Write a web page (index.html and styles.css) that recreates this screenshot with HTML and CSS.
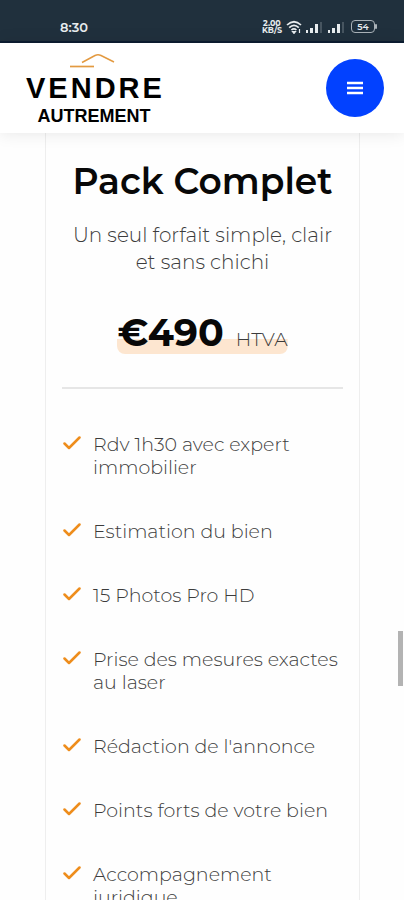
FILE: index.html
```
<!DOCTYPE html>
<html lang="fr">
<head>
<meta charset="utf-8">
<meta name="viewport" content="width=device-width, initial-scale=1">
<title>Vendre Autrement</title>
<link rel="stylesheet" href="styles.css">
</head>
<body>
<div class="screen">
  <div class="status">
    <span class="clock">8:30</span>
    <div class="indicators">
      <span class="speed"><b>2.00</b><b>KB/S</b></span>
      <svg class="wifi" viewBox="0 0 16 14" width="16" height="14" fill="none" stroke="currentColor" stroke-width="1.7"><path d="M1 5Q8-1.5 15 5M3.2 7.6Q8 3 12.8 7.6M5.4 10Q8 7.6 10.4 10"/><path d="M6.5 11.5h3L8 13.4zM13.500 9v4" stroke-width="1.200" fill="currentColor"/></svg>
      <svg viewBox="0 0 17 12" width="17" height="12" fill="currentColor"><path d="M0 9h2v3H0zM4 7h3v5H4zM9 3h3v9H9z"/><path d="M14 1h2v11h-2z" opacity=".2"/></svg>
      <svg class="second" viewBox="0 0 17 12" width="17" height="12" fill="currentColor"><path d="M0 9h2v3H0zM4 7h3v5H4zM9 3h3v9H9z"/><path d="M14 1h2v11h-2z" opacity=".2"/></svg>
      <span class="battery">54</span>
    </div>
  </div>
  <header class="header">
    <a class="logo" href="#">
      <svg viewBox="0 0 48 16" width="48" height="16" fill="none" stroke="#e39a41"><path d="M0 13.500h24" stroke-width="1.700"/><path d="M12 9.500L25 2.500Q28 1 31 2.500L44 9" stroke-width="1.500"/></svg>
      <span class="logo-top">VENDRE</span>
      <span class="logo-bottom">AUTREMENT</span>
    </a>
    <button class="menu" type="button" aria-label="Menu"><svg viewBox="0 0 16 14" width="16" height="14" stroke="#fff" stroke-width="2.500"><path d="M0 2h16M0 7h16M0 12h16"/></svg></button>
  </header>
  <main class="card">
    <h1>Pack Complet</h1>
    <p class="intro">Un seul forfait simple, clair et sans chichi</p>
    <p class="price"><span class="mark"><strong>€490</strong><span class="tax">HTVA</span></span></p>
    <hr>
    <ul class="features">
      <li><svg viewBox="0 0 18 14" width="18" height="14"><path d="M1.500 7.500L6 12L16.500 1.500"/></svg><span>Rdv 1h30 avec expert immobilier</span></li>
      <li><svg viewBox="0 0 18 14" width="18" height="14"><path d="M1.500 7.500L6 12L16.500 1.500"/></svg><span>Estimation du bien</span></li>
      <li><svg viewBox="0 0 18 14" width="18" height="14"><path d="M1.500 7.500L6 12L16.500 1.500"/></svg><span>15 Photos Pro HD</span></li>
      <li><svg viewBox="0 0 18 14" width="18" height="14"><path d="M1.500 7.500L6 12L16.500 1.500"/></svg><span>Prise des mesures exactes au laser</span></li>
      <li><svg viewBox="0 0 18 14" width="18" height="14"><path d="M1.500 7.500L6 12L16.500 1.500"/></svg><span>Rédaction de l'annonce</span></li>
      <li><svg viewBox="0 0 18 14" width="18" height="14"><path d="M1.500 7.500L6 12L16.500 1.500"/></svg><span>Points forts de votre bien</span></li>
      <li><svg viewBox="0 0 18 14" width="18" height="14"><path d="M1.500 7.500L6 12L16.500 1.500"/></svg><span>Accompagnement juridique</span></li>
    </ul>
  </main>
  <div class="scroll-thumb"></div>
</div>
</body>
</html>
```
FILE: styles.css
```
* { box-sizing: border-box; }
body {
  margin: 0;
  background: #fefefe;
  color: #3c3c3c;
  font-family: Montserrat, Inter, "Open Sans", sans-serif;
}
.screen {
  position: relative;
  height: 100vh;
  overflow: hidden;
}
.status {
  display: flex;
  align-items: center;
  justify-content: space-between;
  height: 43px;
  padding: 12px 29px 0 60px;
  background: #20303d;
  border-bottom: 2px solid #0c1d32;
  color: #e8ecee;
}
.clock {
  font-size: 13px;
  font-weight: 600;
}
.indicators {
  display: flex;
  align-items: center;
  gap: 4px;
}
.second { margin-left: 1px; }
.speed {
  display: grid;
  justify-items: center;
  font-size: 8px;
  line-height: 7px;
}
.battery {
  position: relative;
  width: 24px;
  height: 13px;
  margin-left: 2px;
  border: 1px solid #aab2b8;
  border-radius: 4px;
  font-size: 9px;
  font-weight: 600;
  line-height: 11px;
  text-align: center;
}
.battery::after {
  content: "";
  position: absolute;
  top: 3px;
  right: -3px;
  width: 2px;
  height: 5px;
  border-radius: 1px;
  background: #aab2b8;
}
.header {
  position: relative;
  display: flex;
  align-items: center;
  justify-content: space-between;
  height: 90px;
  padding: 0 20px 0 26px;
  background: #fff;
  box-shadow: 0 0 16px rgba(0, 0, 0, 0.1);
}
.logo {
  display: flex;
  flex-direction: column;
  align-items: center;
  margin-top: 6px;
  color: #000;
  font-family: "Liberation Sans", Arial, sans-serif;
  font-weight: 700;
  text-decoration: none;
}
.logo-top {
  margin: 4px -3px 0 0;
  font-size: 29px;
  line-height: 30px;
  letter-spacing: 3px;
}
.logo-bottom {
  font-size: 18px;
  line-height: 26px;
}
.menu {
  display: grid;
  place-items: center;
  width: 58px;
  height: 58px;
  padding: 0;
  border: 0;
  border-radius: 50%;
  background: #0241ff;
}
.card {
  margin: 0 44px 0 45px;
  padding: 24px 16px 0;
  border: solid #eee;
  border-width: 0 1px;
}
h1 {
  margin: 0;
  color: #080808;
  font-size: 36px;
  font-weight: 600;
  line-height: 48px;
  text-align: center;
  white-space: nowrap;
}
.intro {
  margin: 17px 0 0;
  font-size: 20px;
  font-weight: 300;
  line-height: 27px;
  text-align: center;
}
.price {
  margin: 36px 0 0;
  text-align: center;
}
.mark {
  display: inline-flex;
  align-items: baseline;
  gap: 12px;
  border-radius: 8px;
  background: linear-gradient(#fde6d0, #fde6d0) bottom / 100% 15px no-repeat;
}
.mark strong {
  color: #080808;
  font-size: 38px;
  font-weight: 700;
  line-height: 42px;
}
.tax {
  font-size: 19px;
  font-weight: 300;
}
hr {
  margin: 33px 0 0;
  border: 0;
  border-top: 2px solid #e6e6e6;
}
.features {
  display: grid;
  gap: 41px;
  margin: 44px 0 0;
  padding: 0;
  list-style: none;
  font-size: 19px;
  font-weight: 300;
  line-height: 23px;
}
.features li {
  display: flex;
  gap: 12px;
}
.features svg {
  flex: none;
  margin: 3px 0 0 1px;
  fill: none;
  stroke: #ee8d1c;
  stroke-width: 2.5;
  stroke-linecap: round;
  stroke-linejoin: round;
}
.scroll-thumb {
  position: absolute;
  top: 631px;
  right: 1px;
  width: 5px;
  height: 55px;
  background: #b3b3b3;
}
```
